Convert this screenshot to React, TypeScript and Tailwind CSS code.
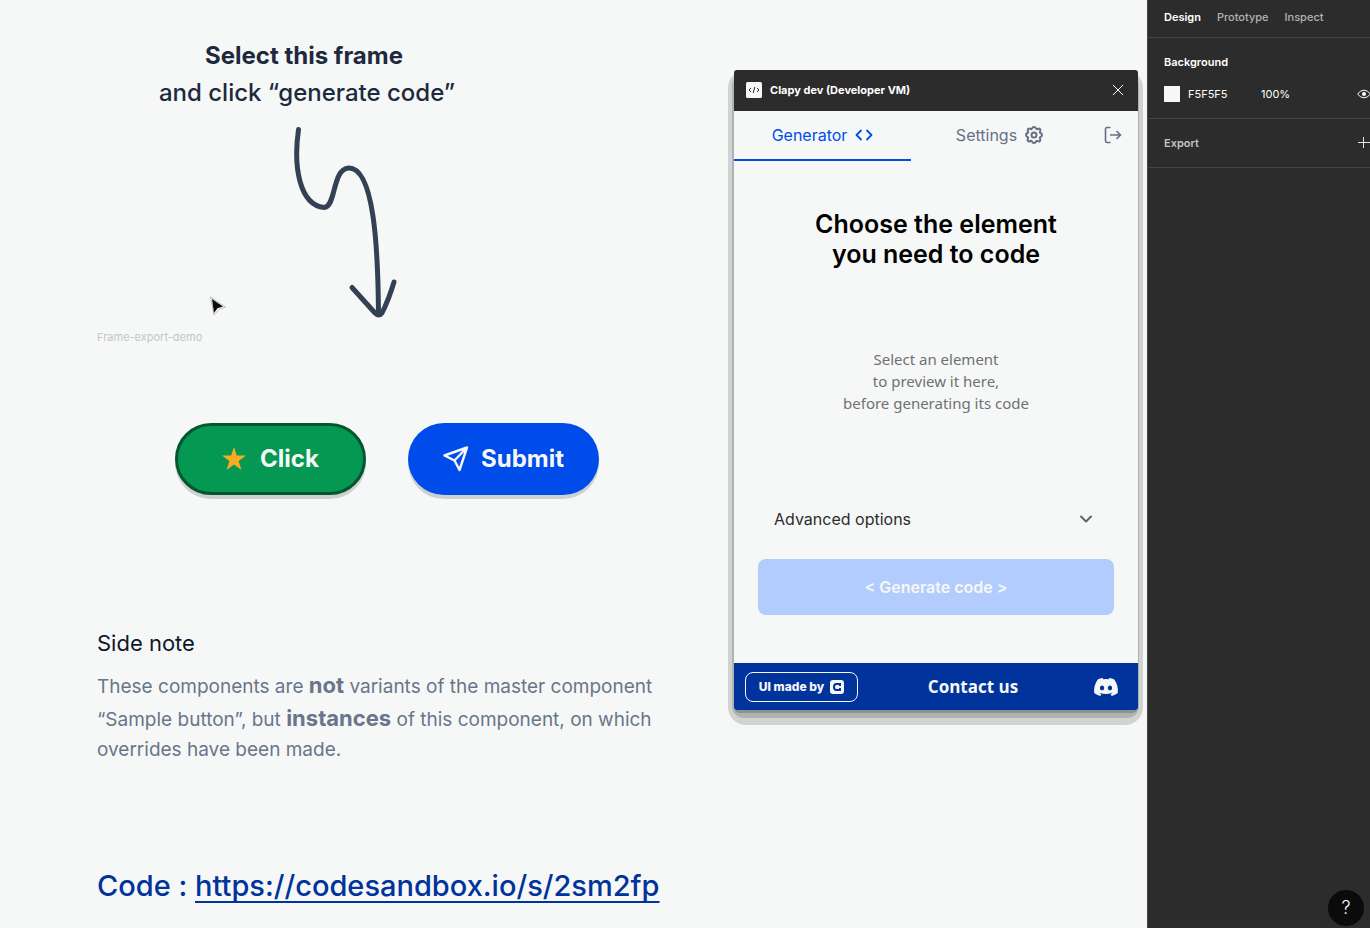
import React from "react";
import { FaDiscord } from "react-icons/fa";
import { FiCode, FiChevronDown } from "react-icons/fi";

function ScribbleArrow() {
  return (
    <svg aria-hidden="true" className="ml-[187px] mt-[9px] block h-[204px] w-[124px]" viewBox="284 120 124 204" fill="none" stroke="#334155" strokeWidth="5" strokeLinecap="round" strokeLinejoin="round">
      <path d="M298.500 129.500C293 168 300 205 324 207.500C336 208 332 169 348.500 168C374 167 378 247 378.500 314" />
      <path d="M352 287.500L375 313Q379 317 382 313Q389 299 394 282" />
    </svg>
  );
}

function Cursor() {
  return (
    <svg aria-hidden="true" className="absolute left-[209px] top-[296px] h-[22px] w-[18px]" viewBox="0 0 18 22">
      <path d="M1.500 1L16.500 11L10.500 13L5 19Z" fill="#fff" stroke="#b9bbba" strokeWidth="1" />
      <path d="M3 3L14 10.600L8.500 12.200L5 17Z" fill="#0a0a0a" />
    </svg>
  );
}

function Canvas() {
  return (
    <section className="relative min-w-0 flex-1 pl-[97px] pt-[37px]">
      <h1 className="w-[420px] text-center text-2xl leading-[37px] text-slate-800">
        <span className="block pr-1.5 font-bold">Select this frame</span>
        <span className="block font-medium">and click “generate code”</span>
      </h1>
      <ScribbleArrow />
      <Cursor />
      <p className="mt-[3px] text-[11px] leading-5 text-[#c4c6c5]">Frame-export-demo</p>
      <div className="mt-[76px] flex gap-[42px] pl-[78px]">
        <button className="flex h-[72px] w-[191px] items-center justify-center gap-3.5 rounded-full border-[3px] border-[#05552f] bg-[#049853] text-2xl font-bold text-[#f6f8f7] shadow-[0_4px_0_0_#cfd1d0]">
          <svg aria-hidden="true" className="h-6 w-6" viewBox="0 0 24 24" fill="#fbab1f">
            <path d="M12 0L14.800 8.500H24L16.600 14L19.400 23L12 17.600L4.600 23L7.400 14L0 8.500H9.200Z" />
          </svg>
          Click
        </button>
        <button className="flex h-[72px] w-[191px] items-center justify-center gap-3 rounded-full bg-[#004cea] text-2xl font-bold text-[#f6f8f7] shadow-[0_4px_0_0_#cfd1d0]">
          <svg aria-hidden="true" className="h-[26px] w-[26px]" viewBox="0 0 26 26" fill="none" stroke="currentColor" strokeWidth="2.400" strokeLinejoin="round" strokeLinecap="round">
            <path d="M24 1.500L1.500 9.500L11.500 14.500L16.500 24L24 1.500L11.500 14.500" />
          </svg>
          Submit
        </button>
      </div>
      <h2 className="mt-[132px] text-[22px] leading-8 text-[#0f172a]">Side note</h2>
      <p className="mt-2.5 text-[19px] leading-[29px] text-[#6a758a]">
        These components are <b className="text-[22px] leading-[33px]">not</b> variants of the master component
        <br />
        “Sample button”, but <b className="text-[22px] leading-[33px]">instances</b> of this component, on which
        <br />
        overrides have been made.
      </p>
      <p className="mt-[102px] text-[29px] leading-10 font-medium text-[#00339b]">
        Code :{" "}
        <a href="https://codesandbox.io/s/2sm2fp" className="underline decoration-2 underline-offset-[5px] [text-decoration-skip-ink:none]">
          https://codesandbox.io/s/2sm2fp
        </a>
      </p>
    </section>
  );
}

function PluginWindow() {
  return (
    <section className="relative mt-[70px] mr-[9px] h-[640px] w-[404px] shrink-0">
      <div className="absolute -right-[5px] -bottom-[15px] -left-[6px] top-0 rounded-[18px] bg-[#d1d3d2]" />
      <div className="absolute -right-px -bottom-2 -left-0.5 top-1 rounded-[12px] bg-[#b0b2b1]" />
      <div className="absolute -bottom-[3px] left-0 right-0 top-4 rounded-md bg-[#8e8f91]" />
      <div className="relative flex h-full flex-col overflow-hidden rounded-[3px] bg-[#f6f8f7]">
        <header className="flex h-[41px] shrink-0 items-center bg-[#2c2c2c] px-3 pb-px text-white">
          <svg aria-hidden="true" className="mr-2 h-4 w-4" viewBox="0 0 16 16" fill="none" stroke="#2c2c2c">
            <rect width="16" height="16" rx="1.500" fill="#f6f8f7" stroke="none" />
            <path d="M5 6L3 8L5 10M11 6L13 8L11 10M8.800 5L7.200 11" />
          </svg>
          <h2 className="flex-1 text-[11px] font-bold">Clapy dev (Developer VM)</h2>
          <button aria-label="Close">
            <svg aria-hidden="true" className="h-4 w-4" viewBox="0 0 16 16" stroke="currentColor" strokeWidth="1">
              <path d="M3 3L13 13M13 3L3 13" />
            </svg>
          </button>
        </header>
        <nav className="flex h-[50px] shrink-0 text-base">
          <button className="flex flex-1 items-center justify-center gap-2 border-b-2 border-[#004cea] text-[#004cea]">
            Generator <FiCode className="h-[18px] w-[18px]" strokeWidth={2.4} />
          </button>
          <button className="flex flex-1 items-center justify-center gap-2 border-b-2 border-transparent text-[#667085]">
            Settings
            <svg aria-hidden="true" className="h-[18px] w-[18px]" viewBox="0 0 18 18" fill="none" stroke="currentColor" strokeWidth="2" strokeLinejoin="round">
              <path d="M7 2.500Q7.500 1 9 1T11 2.500Q11.400 3.500 12.500 3Q14 2.200 15 3.100T15 5.500Q14.500 6.600 15.500 7Q17 7.500 17 9T15.500 11Q14.500 11.400 15 12.500Q15.800 14 14.900 15T12.500 15Q11.400 14.500 11 15.500Q10.500 17 9 17T7 15.500Q6.600 14.500 5.500 15Q4 15.800 3 14.900T3 12.500Q3.500 11.400 2.500 11Q1 10.500 1 9T2.500 7Q3.500 6.600 3 5.500Q2.200 4 3.100 3T5.500 3Q6.600 3.500 7 2.500Z" />
              <circle cx="9" cy="9" r="2.500" />
            </svg>
          </button>
          <button aria-label="Log out" className="flex w-[50px] items-center justify-center border-b-2 border-transparent text-[#667085]">
            <svg aria-hidden="true" className="h-[18px] w-[18px]" viewBox="0 0 18 18" fill="none" stroke="currentColor" strokeWidth="1.600">
              <path d="M6.500 1.500H3Q1.500 1.500 1.500 3V15Q1.500 16.500 3 16.500H6.500M6 9H16.500M12.500 5L16.500 9L12.500 13" />
            </svg>
          </button>
        </nav>
        <div className="flex flex-1 flex-col px-6 pt-12">
          <h3 className="text-center text-[25px] leading-[30px] font-semibold text-black">
            Choose the element
            <br />
            you need to code
          </h3>
          <p className="mt-[79px] text-center font-['Noto_Sans',sans-serif] text-[15px] leading-[22px] text-[#6f7173]">
            Select an element
            <br />
            to preview it here,
            <br />
            before generating its code
          </p>
          <button className="mt-[93px] flex h-6 items-center justify-between px-4 text-base text-[#2c2c2c]">
            Advanced options
            <FiChevronDown className="mr-0.5 h-5 w-5 text-[#606264]" strokeWidth={2.4} />
          </button>
          <button className="mt-7 h-14 rounded-lg bg-[#b2ccfe] text-base font-semibold text-[#f6f8f7]">&lt; Generate code &gt;</button>
        </div>
        <footer className="flex h-[47px] shrink-0 items-center justify-between bg-[#00339b] pr-3.5 pl-[11px] font-bold text-[#f6f8f7]">
          <button className="flex h-[30px] w-[113px] items-center justify-center gap-1.5 rounded-lg border border-[#f6f8f7] text-xs font-extrabold">
            UI made by
            <svg aria-hidden="true" className="h-3.5 w-3.5" viewBox="0 0 14 14">
              <rect width="14" height="14" rx="3" fill="#f6f8f7" />
              <path d="M10 6V4H6.500Q4 4 4 7Q4 10 6.500 10H10V8" fill="none" stroke="#00339b" strokeWidth="2" />
            </svg>
          </button>
          <a href="#contact" className="font-['Open_Sans',sans-serif] text-[17px]">Contact us</a>
          <button aria-label="Discord" className="flex w-9 justify-center">
            <FaDiscord className="h-[26px] w-[26px]" />
          </button>
        </footer>
      </div>
    </section>
  );
}

function Inspector() {
  return (
    <aside className="relative w-[223px] shrink-0 overflow-hidden border-l border-[#444] bg-[#2c2c2c] text-[11px] leading-4 text-white">
      <nav className="flex h-[38px] items-center gap-4 border-b border-[#444] pb-1 pl-4">
        <button className="font-semibold">Design</button>
        <button className="font-medium text-[#b3b3b3]">Prototype</button>
        <button className="font-medium text-[#b3b3b3]">Inspect</button>
      </nav>
      <section className="h-[81px] border-b border-[#444] pt-4 pl-4">
        <h2 className="font-semibold">Background</h2>
        <div className="mt-4 flex items-center">
          <span className="mr-2 h-4 w-4 bg-[#f6f8f7]" />
          <span className="w-[73px]">F5F5F5</span>
          <span className="flex-1">100%</span>
          <button aria-label="Toggle visibility" className="-mr-px">
            <svg aria-hidden="true" className="h-4 w-3.5" viewBox="0 0 14 16" fill="none" stroke="#fff">
              <path d="M0.700 8Q3 4.200 7 4.200Q11 4.200 13.300 8Q11 11.800 7 11.800Q3 11.800 0.700 8Z" />
              <circle cx="7" cy="8" r="2" fill="#fff" stroke="none" />
            </svg>
          </button>
        </div>
      </section>
      <section className="flex h-[49px] items-center justify-between border-b border-[#444] pl-4">
        <h2 className="font-semibold text-[#c4c4c4]">Export</h2>
        <button aria-label="Add export">
          <svg aria-hidden="true" className="h-3 w-3" viewBox="0 0 12 12" stroke="#e5e5e5">
            <path d="M0 5.500H12M5.500 0V11" />
          </svg>
        </button>
      </section>
      <button aria-label="Help" className="absolute right-1.5 bottom-0.5 flex h-9 w-9 items-center justify-center rounded-full bg-[#0b0b0b] text-lg font-light">
        ?
      </button>
    </aside>
  );
}

export default function App() {
  return (
    <main className="flex min-h-screen bg-[#f6f8f7] font-['Inter',sans-serif]">
      <Canvas />
      <PluginWindow />
      <Inspector />
    </main>
  );
}
